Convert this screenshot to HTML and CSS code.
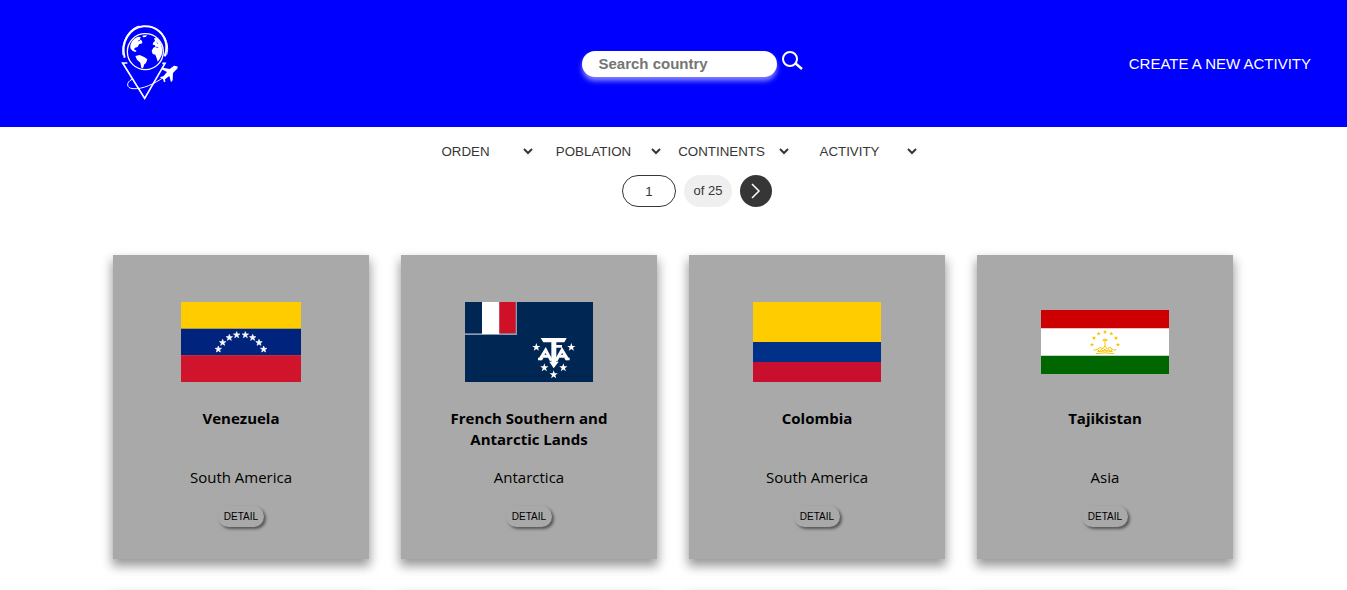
FILE: index.html
```html
<!DOCTYPE html>
<html lang="en">
<head>
<meta charset="utf-8">
<title>Countries</title>
<link rel="stylesheet" href="styles.css">
</head>
<body>
<svg class="defs" aria-hidden="true">
  <defs>
    <path id="star" d="M0-10 2.4-3.2 9.5-3.1 3.8 1.2 5.9 8.1 0 4-5.9 8.1-3.8 1.2-9.5-3.1-2.4-3.2Z"/>
  </defs>
</svg>
<header class="header">
  <a class="logo" href="#" aria-label="Home">
    <svg class="logo-art" viewBox="0 0 240 285" fill="none" stroke="#fff">
      <circle cx="106" cy="107" r="54" stroke-width="4"/>
      <path d="M44 125C31 79 59 35 100 31c35-3 65 20 69 58 1 12-1 22-5 32" stroke-width="6"/>
      <path d="M39 118C33 78 55 39 87 30M122 32c30 8 52 36 51 68-1 9-2 14-4 18" stroke-width="3"/>
      <path d="M52 141H38L104 247 165 142H157" stroke-width="5"/>
      <path d="M66 190C47 199 49 217 69 218c29 2 62-13 98-38" stroke-width="3"/>
      <path fill="#fff" stroke="none" d="M61 89C64 75 74 65 85 62l8 2-4 6 7 4 1 8-10 3-4 8-8 2-3 5 8 5-4 3-9-4-6-7ZM97 59l14-2-4 6-8 1ZM76 120l13-3 15 7 8 6-4 11-5 4-4 12-5-2-3-15-10-9ZM132 67l8-1 8 9 6 11 3 17-2 15-7 13-5 6-3-10-4-11-8-2-3-10 5-9 6-3-2-5-6-1 2-7 5-4Z"/>
      <path d="M137 93l8 2M140 79l4 4M84 75l6-2" stroke="#00f" stroke-width="2"/>
      <path fill="#fff" stroke="none" d="M201 151c4 2 2 6-1 9l-11 11-1 22-5 6-5-19-13 10 1 7-4 2-3-10-9-4 3-3 7-1 11-13-16-8 4-5 20 4 13-10Z"/>
    </svg>
  </a>
  <form class="search" role="search">
    <input class="search-input" type="search" placeholder="Search country" aria-label="Search country">
    <button class="search-button" type="button" aria-label="Search">
      <svg viewBox="0 0 22 20" width="22" height="20" fill="none" stroke="#fff" stroke-width="2"><circle cx="8" cy="8" r="7"/><path d="M13 12l7 6" stroke-width="2.4"/></svg>
    </button>
  </form>
  <a class="create-link" href="#">CREATE A NEW ACTIVITY</a>
</header>
<main class="main">
  <div class="filters">
    <label class="filter"><select class="filter-select" aria-label="Orden"><option>ORDEN</option></select><svg class="chevron" viewBox="0 0 10 8"><path d="M1 2l4 4 4-4"/></svg></label>
    <label class="filter"><select class="filter-select" aria-label="Poblation"><option>POBLATION</option></select><svg class="chevron" viewBox="0 0 10 8"><path d="M1 2l4 4 4-4"/></svg></label>
    <label class="filter"><select class="filter-select" aria-label="Continents"><option>CONTINENTS</option></select><svg class="chevron" viewBox="0 0 10 8"><path d="M1 2l4 4 4-4"/></svg></label>
    <label class="filter"><select class="filter-select" aria-label="Activity"><option>ACTIVITY</option></select><svg class="chevron" viewBox="0 0 10 8"><path d="M1 2l4 4 4-4"/></svg></label>
  </div>
  <nav class="pager" aria-label="Pages">
    <input class="page-input" type="text" value="1" aria-label="Page">
    <span class="page-total">of 25</span>
    <button class="page-next" type="button" aria-label="Next page">
      <svg viewBox="0 0 10 16" width="10" height="16" fill="none" stroke="#fff" stroke-width="1.5"><path d="M1 1l7 7-7 7"/></svg>
    </button>
  </nav>
  <section class="cards">
    <article class="card">
      <svg class="flag" viewBox="0 0 360 240" role="img" aria-label="Flag of Venezuela">
        <path fill="#fc0" d="M0 0h360v80H0z"/><path fill="#00247d" d="M0 80h360v80H0z"/><path fill="#cf142b" d="M0 160h360v80H0z"/>
        <g fill="#fff" stroke="#fff" stroke-width="2"><use href="#star" x="112" y="142"/><use href="#star" x="125" y="122"/><use href="#star" x="145" y="107"/><use href="#star" x="167" y="99"/><use href="#star" x="193" y="99"/><use href="#star" x="215" y="107"/><use href="#star" x="234" y="122"/><use href="#star" x="248" y="142"/></g>
      </svg>
      <h2 class="name">Venezuela</h2>
      <p class="region">South America</p>
      <button class="detail" type="button">DETAIL</button>
    </article>
    <article class="card">
      <svg class="flag" viewBox="0 0 384 240" role="img" aria-label="Flag of the French Southern and Antarctic Lands">
        <path fill="#002654" d="M0 0h384v240H0z"/><path fill="#8c9caf" d="M0 0h156v99H0z"/><path fill="#002654" d="M0 0h51v94H0z"/><path fill="#fff" d="M51 0h52v96H51z"/><path fill="#ce1126" d="M103 0h49v94h-49z"/>
        <g fill="#fff"><use href="#star" transform="translate(214 136) scale(1.3)"/><use href="#star" transform="translate(319 136) scale(1.3)"/><use href="#star" transform="translate(238 197) scale(1.3)"/><use href="#star" transform="translate(295 197) scale(1.3)"/><use href="#star" transform="translate(266 218) scale(1.3)"/></g>
        <path fill="#fff" d="M227 108h78l-7 13h-24v8h17v8h-17v42h7l-15 20-13-20h6v-58h-24z"/>
        <path fill="none" stroke="#fff" stroke-width="9" d="M224 173l18-29 17 32M228 163h24M273 176l18-32 18 29M280 163h24"/>
        <path fill="#fff" d="M219 167h17l-5 8h-12zM297 167h17v8h-12z"/>
      </svg>
      <h2 class="name">French Southern and Antarctic Lands</h2>
      <p class="region">Antarctica</p>
      <button class="detail" type="button">DETAIL</button>
    </article>
    <article class="card">
      <svg class="flag" viewBox="0 0 128 80" role="img" aria-label="Flag of Colombia">
        <path fill="#fc0" d="M0 0h128v40H0z"/><path fill="#003087" d="M0 40h128v20H0z"/><path fill="#c8102e" d="M0 60h128v20H0z"/>
      </svg>
      <h2 class="name">Colombia</h2>
      <p class="region">South America</p>
      <button class="detail" type="button">DETAIL</button>
    </article>
    <article class="card">
      <svg class="flag" viewBox="0 0 384 192" role="img" aria-label="Flag of Tajikistan">
        <path fill="#fff" d="M0 0h384v192H0z"/><path fill="#c00" d="M0 0h384v55H0z"/><path fill="#060" d="M0 137h384v55H0z"/>
        <g fill="#f8c300"><use href="#star" transform="translate(153 104) scale(.7)"/><use href="#star" transform="translate(159 84) scale(.7)"/><use href="#star" transform="translate(173 71) scale(.7)"/><use href="#star" transform="translate(192 66) scale(.7)"/><use href="#star" transform="translate(211 71) scale(.7)"/><use href="#star" transform="translate(225 84) scale(.7)"/><use href="#star" transform="translate(231 104) scale(.7)"/></g>
        <g fill="none" stroke="#f8c300" stroke-width="3"><path d="M165 131q27-5 54 0M169 125q23-5 46 0M158 119q5 3 12-1l7-6 8 5 7-9 7 9 8-5 7 6q7 4 12 1M192 91v20M185 91q7-9 14 0zM170 118l5 7 6-7 6 6 5-7 5 7 6-6 6 6 5-7"/></g>
      </svg>
      <h2 class="name">Tajikistan</h2>
      <p class="region">Asia</p>
      <button class="detail" type="button">DETAIL</button>
    </article>
    <article class="card"></article>
    <article class="card"></article>
    <article class="card"></article>
    <article class="card"></article>
  </section>
</main>
</body>
</html>
```
FILE: styles.css
```css
* {
  box-sizing: border-box;
}

body {
  height: 100vh;
  margin: 0;
  overflow: hidden;
  background: #fff;
  font-family: "Liberation Sans", Arial, sans-serif;
}

input,
select,
button {
  font-family: inherit;
}

.defs {
  display: none;
}

.header {
  display: grid;
  grid-template-columns: 1fr auto 1fr;
  align-items: center;
  padding: 16px 36px 16px 74px;
  background: #00f;
}

.logo {
  justify-self: start;
  margin-left: 36px;
}

.logo-art {
  display: block;
  width: 80px;
  height: 95px;
}

.search {
  display: flex;
  align-items: center;
  gap: 5px;
}

.search-input {
  width: 195px;
  height: 26px;
  padding: 0 17px;
  border: 0;
  border-radius: 13px;
  outline: 0;
  background: #fff;
  box-shadow: 0 4px 5px rgba(255, 255, 255, 0.5);
  font-size: 15px;
  font-weight: 700;
  appearance: none;
}

.search-input::placeholder {
  color: #757575;
}

.search-button {
  display: flex;
  padding: 0 0 6px;
  border: 0;
  background: none;
}

.create-link {
  justify-self: end;
  color: #fff;
  font-size: 15px;
  text-decoration: none;
}

.main {
  padding-right: 1px;
}

.filters {
  display: flex;
  justify-content: center;
}

.filter {
  display: grid;
  align-items: center;
  width: 128px;
  height: 48px;
}

.filter-select,
.chevron {
  grid-area: 1 / 1;
}

.filter-select {
  width: 100%;
  height: 32px;
  padding: 0 31px 0 0;
  border: 0;
  background: none;
  color: #363636;
  text-align: center;
  text-align-last: center;
  appearance: none;
}

.chevron {
  justify-self: end;
  width: 10px;
  height: 8px;
  margin-right: 12px;
  fill: none;
  stroke: #363636;
  stroke-width: 2;
  pointer-events: none;
}

.pager {
  display: flex;
  justify-content: center;
  gap: 8px;
  padding-left: 48px;
  color: #363636;
}

.page-input {
  width: 54px;
  height: 32px;
  border: 1px solid #363636;
  border-radius: 16px;
  background: #fff;
  color: inherit;
  text-align: center;
}

.page-total {
  width: 48px;
  border-radius: 16px;
  background: #efefef;
  font-size: 13px;
  line-height: 32px;
  text-align: center;
}

.page-next {
  display: flex;
  align-items: center;
  justify-content: center;
  width: 32px;
  height: 32px;
  padding: 0;
  border: 0;
  border-radius: 50%;
  background: #363636;
}

.cards {
  display: grid;
  grid-template-columns: repeat(auto-fit, 256px);
  justify-content: center;
  gap: 32px;
  padding: 48px 100px;
}

.card {
  display: flex;
  flex-direction: column;
  align-items: center;
  min-height: 304px;
  padding: 47px 40px 32px;
  background: #a9a9a9;
  box-shadow: 0 6px 10px 1px rgba(0, 0, 0, 0.4);
  font-family: "Open Sans", "Noto Sans", sans-serif;
  font-size: 15px;
  line-height: 21px;
  text-align: center;
}

.flag {
  width: 128px;
  height: 80px;
}

.name {
  min-height: 42px;
  margin: 26px 0 17px;
  font-size: 15px;
  font-weight: 700;
}

.region {
  margin: 0 0 18px;
}

.detail {
  width: 46px;
  height: 21px;
  padding: 0;
  border: 0;
  border-radius: 11px;
  background: #a9a9a9;
  box-shadow: 2px 2px 3px rgba(0, 0, 0, 0.5);
  color: #000;
  font-family: "Liberation Sans", Arial, sans-serif;
  font-size: 10px;
}
```
